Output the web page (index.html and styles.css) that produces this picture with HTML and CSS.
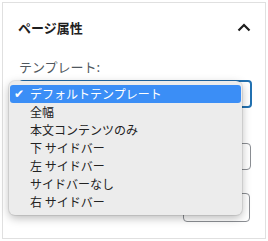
FILE: index.html
```html
<!DOCTYPE html>
<html lang="ja">
<head>
    <meta charset="UTF-8">
    <meta name="viewport" content="width=device-width, initial-scale=1.0">
    <title>ページ属性</title>
    <link rel="stylesheet" href="styles.css">
</head>
<body>
    <div class="panel">
        <div class="panel-header">
            <h2 class="panel-title">ページ属性</h2>
            <svg class="chevron" width="14" height="9" viewBox="0 0 14 9">
                <path d="M1.5 7.5 L7 2 L12.5 7.5" fill="none" stroke="#1e1e1e" stroke-width="2.2"/>
            </svg>
        </div>
        <div class="panel-body">
            <label class="field-label">テンプレート:</label>
            <div class="select select-focus">
                <svg class="select-arrow" width="8" height="5" viewBox="0 0 8 5">
                    <path d="M0.5 0.5 L4 4 L7.5 0.5" fill="none" stroke="#1e1e1e" stroke-width="1.4"/>
                </svg>
            </div>
            <div class="select select-parent">
                <svg class="select-arrow" width="8" height="5" viewBox="0 0 8 5">
                    <path d="M0.5 0.5 L4 4 L7.5 0.5" fill="none" stroke="#1e1e1e" stroke-width="1.4"/>
                </svg>
            </div>
            <div class="order-row">
                <div class="order-input"></div>
            </div>
        </div>

        <!-- open dropdown of the template select -->
        <ul class="menu">
            <li class="menu-item selected"><span class="check">✔</span>デフォルトテンプレート</li>
            <li class="menu-item">全幅</li>
            <li class="menu-item">本文コンテンツのみ</li>
            <li class="menu-item">下 サイドバー</li>
            <li class="menu-item">左 サイドバー</li>
            <li class="menu-item">サイドバーなし</li>
            <li class="menu-item">右 サイドバー</li>
        </ul>
    </div>
</body>
</html>
```

FILE: styles.css
```css
body {
    margin: 0;
    padding: 2px;
    background: #fff;
    font-family: "Noto Sans CJK JP", "Noto Sans", sans-serif;
}
.panel {
    position: relative;
    width: 262px;
    height: 235px;
    border: 1px solid #e0e0e0;
    background: #fff;
}
.panel-header {
    display: flex;
    align-items: center;
    justify-content: space-between;
    height: 49px;
    padding: 0 14px 0 15px;
}
.panel-title {
    margin: 0;
    font-size: 13px;
    line-height: 16px;
    font-weight: bold;
    color: #1e1e1e;
}
.chevron {
    display: block;
}
.panel-body {
    padding: 7px 13px 0 16px;
}
.field-label {
    display: block;
    font-size: 13px;
    line-height: 16px;
    color: #50575e;
    margin-bottom: 5px;
}
.select {
    box-sizing: border-box;
    display: flex;
    align-items: center;
    justify-content: flex-end;
    height: 28px;
    border: 1px solid #8c8f94;
    border-radius: 4px;
    padding-right: 9px;
}
.select-focus {
    border: 2px solid #2271b1;
}
.select-arrow {
    display: block;
}
.select-parent {
    height: 27px;
    margin: 35px 1px 0 1px;
    padding-right: 8px;
}
.order-row {
    display: flex;
    justify-content: flex-end;
    margin-top: 23px;
    padding-right: 2px;
}
.order-input {
    width: 67px;
    height: 29px;
    box-sizing: border-box;
    border: 1px solid #8c8f94;
    border-radius: 4px;
}
.menu {
    position: absolute;
    left: 6px;
    top: 78px;
    width: 233px;
    margin: 0;
    padding: 4px 1px;
    list-style: none;
    background: #ececec;
    border-radius: 6px;
    box-shadow: 0 0 0 1px rgba(0, 0, 0, 0.08), 0 3px 10px rgba(0, 0, 0, 0.28);
    box-sizing: border-box;
}
.menu-item {
    height: 18px;
    line-height: 18px;
    padding-left: 20px;
    font-size: 12px;
    color: #222;
    white-space: nowrap;
}
.menu-item.selected {
    position: relative;
    background: #3b8ef6;
    color: #fff;
    border-radius: 3px;
}
.check {
    position: absolute;
    left: 4px;
    top: 0;
    font-family: "DejaVu Sans", sans-serif;
    font-size: 12px;
}
```
